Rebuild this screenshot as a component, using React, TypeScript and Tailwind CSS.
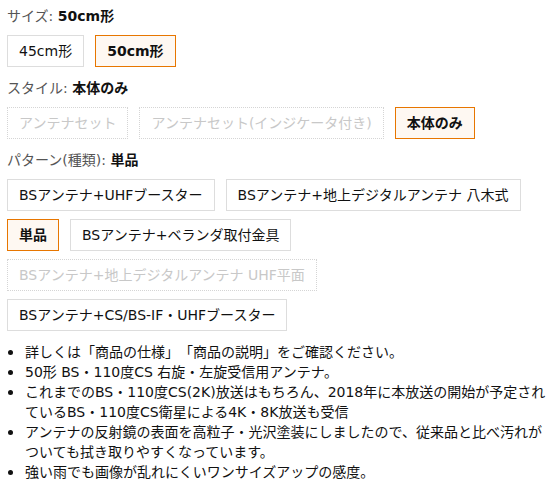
import React from "react";

type Opt = { label: string; state?: "selected" | "disabled" };

const sizes: Opt[] = [{ label: "45cm形" }, { label: "50cm形", state: "selected" }];

const styles: Opt[] = [
  { label: "アンテナセット", state: "disabled" },
  { label: "アンテナセット(インジケータ付き)", state: "disabled" },
  { label: "本体のみ", state: "selected" },
];

const patterns: Opt[] = [
  { label: "BSアンテナ+UHFブースター" },
  { label: "BSアンテナ+地上デジタルアンテナ 八木式" },
  { label: "単品", state: "selected" },
  { label: "BSアンテナ+ベランダ取付金具" },
  { label: "BSアンテナ+地上デジタルアンテナ UHF平面", state: "disabled" },
  { label: "BSアンテナ+CS/BS-IF・UHFブースター" },
];

const bullets = [
  "詳しくは「商品の仕様」「商品の説明」をご確認ください。",
  "50形 BS・110度CS 右旋・左旋受信用アンテナ。",
  "これまでのBS・110度CS(2K)放送はもちろん、2018年に本放送の開始が予定されているBS・110度CS衛星による4K・8K放送も受信",
  "アンテナの反射鏡の表面を高粒子・光沢塗装にしましたので、従来品と比べ汚れがついても拭き取りやすくなっています。",
  "強い雨でも画像が乱れにくいワンサイズアップの感度。",
];

function Choice({ opt }: { opt: Opt }) {
  if (opt.state === "selected") {
    return (
      <div className="h-8 px-[11px] flex items-center border border-[#e77600] bg-[#fef8f2] text-[#111] font-bold">
        {opt.label}
      </div>
    );
  }
  if (opt.state === "disabled") {
    return (
      <div className="h-8 px-[11px] flex items-center border border-dotted border-[#d5d5d5] text-[#c8c8c8]">
        {opt.label}
      </div>
    );
  }
  return (
    <div className="h-8 px-[11px] flex items-center border border-[#ddd] text-[#111]">
      {opt.label}
    </div>
  );
}

function Group({ name, value, opts }: { name: string; value: string; opts: Opt[] }) {
  return (
    <div className="mb-[11px]">
      <div className="h-5 flex items-center">
        <span className="text-[#555]">{name}:&nbsp;</span>
        <span className="font-bold text-[#111]">{value}</span>
      </div>
      <div className="flex flex-wrap gap-x-[11px] gap-y-2 mt-[9px]">
        {opts.map((o) => (
          <Choice key={o.label} opt={o} />
        ))}
      </div>
    </div>
  );
}

export default function App() {
  return (
    <div
      className="w-[558px] h-[483px] bg-white overflow-hidden pl-[7px] pr-[10px] pt-[6px] text-[14px] [text-spacing-trim:space-all]"
      style={{ fontFamily: '"DejaVu Sans", "Noto Sans CJK JP", sans-serif' }}
    >
      <Group name="サイズ" value="50cm形" opts={sizes} />
      <Group name="スタイル" value="本体のみ" opts={styles} />
      <Group name="パターン(種類)" value="単品" opts={patterns} />
      <ul className="mt-[1px] leading-5 text-[#111]">
        {bullets.map((b) => (
          <li key={b} className="flex">
            <span className="w-[18px] shrink-0 pl-[1px] flex items-start">
              <span className="mt-[8px] w-[5px] h-[5px] rounded-full bg-[#111]" />
            </span>
            <span>{b}</span>
          </li>
        ))}
      </ul>
    </div>
  );
}
